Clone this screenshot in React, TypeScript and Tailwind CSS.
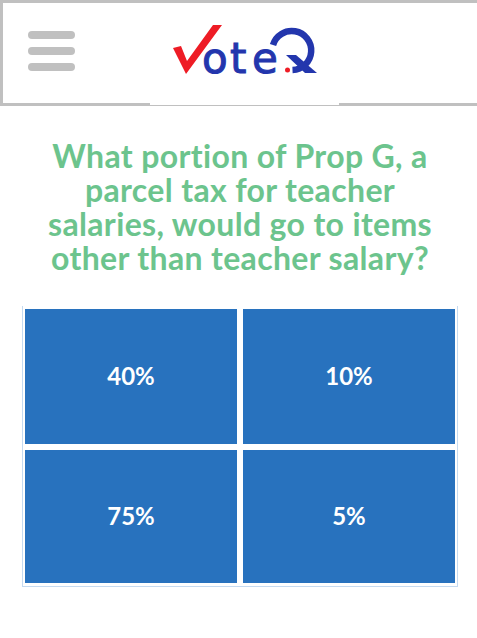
function Logo() {
  return (
    <svg width="150" height="56" viewBox="170 20 150 56" className="block overflow-visible">
      <polygon points="173,46 181,44 187,59 213,23 222,23 186,72" fill="#ee1c25" />
      <text x="202 230 252" y="71" fontFamily="'DejaVu Sans', sans-serif" fontSize="42" fill="#2336ad" stroke="#2336ad" strokeWidth="1">ote</text>
      <path d="M273 43 A19.5 19.5 0 1 1 292.5 68" fill="none" stroke="#2336ad" strokeWidth="6.5" />
      <polygon points="286,53 296,53 317,71 305,71" fill="#2336ad" />
      <circle cx="287.5" cy="68" r="2.5" fill="#ee1c25" />
    </svg>
  );
}

function Choice({ label }: { label: string }) {
  return (
    <button className="flex items-center justify-center bg-[#2872be] pb-[2px] text-white text-[24px] font-bold">
      {label}
    </button>
  );
}

export default function App() {
  return (
    <div className="min-h-[638px] bg-white font-['Lato',sans-serif]">
      <header className="relative flex h-[106px] items-center border-t-[3px] border-b-[3px] border-l-[3px] border-[#c0c0c0]">
        <div className="ml-[25px] mb-[4px] flex w-[47px] flex-col gap-2">
          <span className="h-2 rounded-sm bg-[#c0c0c0]" />
          <span className="h-2 rounded-sm bg-[#c0c0c0]" />
          <span className="h-2 rounded-sm bg-[#c0c0c0]" />
        </div>
        <div className="ml-[95px] mb-[6px]">
          <Logo />
        </div>
        <div className="absolute left-[147px] top-[100px] h-[2px] w-[189px] bg-white" />
      </header>
      <h1 className="ml-[35px] mt-[33px] w-[410px] text-center text-[32px] leading-[34px] font-bold tracking-[0.35px] text-[#6cc48d]">
        What portion of Prop G, a parcel tax for teacher salaries, would go to items other than teacher salary?
      </h1>
      <div className="ml-[22px] mt-[31px] grid h-[281px] w-[436px] grid-cols-2 grid-rows-[135px_133px] gap-[6px] border border-t-0 border-[#c5daf0] pt-[3px] pr-[2px] pb-[2px] pl-[2px]">
        <Choice label="40%" />
        <Choice label="10%" />
        <Choice label="75%" />
        <Choice label="5%" />
      </div>
    </div>
  );
}
